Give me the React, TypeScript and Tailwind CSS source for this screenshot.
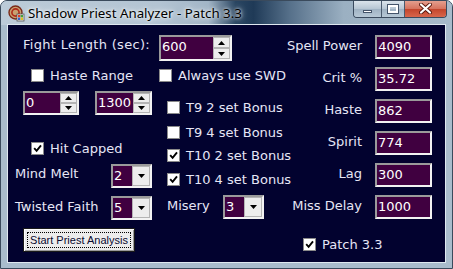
import React from "react";

const sunken =
  "border-2 border-t-[#9a9a9a] border-l-[#9a9a9a] border-r-[#f2f2f2] border-b-[#f2f2f2] bg-[#400040]";

function Up() {
  return (
    <svg width="7" height="4" viewBox="0 0 7 4">
      <polygon points="3.5,0 7,4 0,4" fill="#000" />
    </svg>
  );
}
function Down() {
  return (
    <svg width="7" height="4" viewBox="0 0 7 4">
      <polygon points="0,0 7,0 3.5,4" fill="#000" />
    </svg>
  );
}

function Check({ checked }: { checked?: boolean }) {
  return (
    <span className="w-[13px] h-[13px] bg-white border border-[#8a8a8a] flex items-center justify-center shrink-0">
      {checked && (
        <svg width="9" height="9" viewBox="0 0 9 9">
          <path d="M1.2 4.2 L3.6 6.8 L8 1.4" stroke="#000" strokeWidth="1.9" fill="none" />
        </svg>
      )}
    </span>
  );
}

function CheckRow({ label, checked, className }: { label: string; checked?: boolean; className?: string }) {
  return (
    <div className={"h-[13px] flex items-center gap-[6px] " + (className ?? "")}>
      <Check checked={checked} />
      <span className="leading-[16px] whitespace-nowrap">{label}</span>
    </div>
  );
}

function Spin({ value, className }: { value: string; className: string }) {
  return (
    <div className={"flex " + sunken + " " + className}>
      <span className="flex-1 pl-[1px] text-white leading-[20px]">{value}</span>
      <div className="w-[17px] flex flex-col">
        <div className="flex-1 bg-[#ededed] border border-[#b4b4b4] flex items-center justify-center">
          <Up />
        </div>
        <div className="flex-1 bg-[#ededed] border border-[#b4b4b4] flex items-center justify-center">
          <Down />
        </div>
      </div>
    </div>
  );
}

function Drop({ value }: { value: string }) {
  return (
    <div className={"flex w-[41px] h-[24px] shrink-0 " + sunken}>
      <span className="flex-1 pl-[1px] text-white leading-[20px]">{value}</span>
      <div className="w-[18px] bg-[#ededed] border border-[#b4b4b4] flex items-center justify-center">
        <Down />
      </div>
    </div>
  );
}

function Field({ label, value, first }: { label: string; value: string; first?: boolean }) {
  return (
    <div className={"h-[24px] flex items-center justify-end " + (first ? "mt-[10px]" : "mt-[8px]")}>
      <span className="leading-[16px] -mt-[2px] whitespace-nowrap">{label}</span>
      <div className={"w-[57px] h-[24px] ml-[13px] " + sunken}>
        <span className="block pl-[1px] text-white leading-[20px]">{value}</span>
      </div>
    </div>
  );
}

export default function App() {
  return (
    <div className="w-[453px] h-[269px] overflow-hidden bg-[#a9bccc] rounded-t-[7px] border border-[#3a4a5c] flex flex-col">
      {/* title bar */}
      <div className="h-[24px] shrink-0 flex items-start bg-[linear-gradient(90deg,#bccbd8_0%,#b3c4d3_35%,#a2b5c6_46%,#2a4662_52%,#1f3a57_56%,#56708a_64%,#9bb0c2_76%,#a8bbcb_100%)]">
        <svg width="17" height="17" viewBox="0 0 17 17" className="ml-[7px] mt-[4px] shrink-0">
          <circle cx="7.5" cy="7.5" r="6.5" fill="#c8a070" stroke="#7a2a18" strokeWidth="1.4" />
          <circle cx="7.5" cy="7.5" r="3.6" fill="none" stroke="#b02818" strokeWidth="1.6" />
          <rect x="9" y="9" width="7" height="7" fill="#e8e8e8" stroke="#555" strokeWidth="0.8" />
          <rect x="10" y="10" width="2.4" height="2.4" fill="#e04020" />
          <rect x="12.6" y="10" width="2.4" height="2.4" fill="#40a040" />
          <rect x="10" y="12.6" width="2.4" height="2.4" fill="#3060d0" />
          <rect x="12.6" y="12.6" width="2.4" height="2.4" fill="#e0c020" />
        </svg>
        <span className="ml-[3px] mt-[3px] text-[13.3px] leading-[18px] text-black [font-family:'Noto_Sans',sans-serif] [text-shadow:0_0_6px_#ffffff,0_0_3px_#ffffff] whitespace-nowrap">
          Shadow Priest Analyzer - Patch 3.3
        </span>
        <div className="ml-auto mr-[5px] -mt-[1px] flex h-[18px] border border-[#3a4a5e] border-t-0 rounded-b-[4px] overflow-hidden">
          <div className="w-[28px] flex items-center justify-center bg-[linear-gradient(180deg,#dfe7ee_0%,#b8c7d4_50%,#9eb1c2_51%,#b7c8d6_100%)] border-r border-[#4a5a6e]">
            <span className="w-[9px] h-[3px] bg-white border border-[#44546a] mt-[5px]" />
          </div>
          <div className="w-[23px] flex items-center justify-center bg-[linear-gradient(180deg,#dfe7ee_0%,#b8c7d4_50%,#9eb1c2_51%,#b7c8d6_100%)] border-r border-[#4a5a6e]">
            <span className="w-[10px] h-[8px] border-2 border-white outline outline-1 outline-[#44546a]" />
          </div>
          <div className="w-[41px] flex items-center justify-center bg-[linear-gradient(180deg,#e6a494_0%,#d77560_50%,#c2432a_51%,#d8664c_100%)]">
            <svg width="13" height="11" viewBox="0 0 13 11">
              <path d="M2 1.5 L11 9.5 M11 1.5 L2 9.5" stroke="#5a1a10" strokeWidth="4" strokeLinecap="round" />
              <path d="M2 1.5 L11 9.5 M11 1.5 L2 9.5" stroke="#ffffff" strokeWidth="2.2" strokeLinecap="round" />
            </svg>
          </div>
        </div>
      </div>

      {/* client area */}
      <div className="mx-[7px] h-[237px] shrink-0 bg-[#02022f] flex text-[13px] text-[#e6e6f6] [font-family:'DejaVu_Sans',sans-serif] outline outline-1 outline-[#dfe8f0]">
        {/* column A */}
        <div className="w-[151px] shrink-0 flex flex-col">
          <div className="h-[26px] mt-[10px] pl-[15px] pt-[2px] leading-[16px] tracking-[0.3px] whitespace-nowrap">Fight Length (sec):</div>
          <CheckRow label="Haste Range" className="mt-[8px] pl-[23px]" />
          <div className="h-[24px] mt-[9px] pl-[15px] flex gap-[16px]">
            <Spin value="0" className="w-[56px] h-[24px]" />
            <Spin value="1300" className="w-[57px] h-[24px]" />
          </div>
          <CheckRow label="Hit Capped" checked className="mt-[27px] pl-[23px]" />
          <div className="w-[144px] h-[24px] mt-[9px] pl-[7px] flex items-center">
            <span className="leading-[16px] -mt-[4px]">Mind Melt</span>
            <div className="ml-auto">
              <Drop value="2" />
            </div>
          </div>
          <div className="w-[144px] h-[24px] mt-[8px] pl-[7px] flex items-center">
            <span className="leading-[16px] -mt-[2px] whitespace-nowrap">Twisted Faith</span>
            <div className="ml-auto">
              <Drop value="5" />
            </div>
          </div>
          <div className="mt-[8px] ml-[15px] w-[112px] h-[24px] bg-[#ececec] border border-[#1a1a1a] shadow-[inset_1px_1px_0_#ffffff,inset_-1px_-1px_0_#9a9a9a] p-[3px]">
            <div className="h-full border border-dotted border-[#000] flex items-center justify-center text-[11px] text-[#0a0a30] [font-family:'Liberation_Sans',sans-serif] whitespace-nowrap">
              Start Priest Analysis
            </div>
          </div>
        </div>

        {/* column B */}
        <div className="w-[128px] shrink-0 flex flex-col">
          <Spin value="600" className="mt-[10px] w-[73px] h-[26px]" />
          <CheckRow label="Always use SWD" className="mt-[8px]" />
          <CheckRow label="T9 2 set Bonus" className="mt-[19px] pl-[8px]" />
          <CheckRow label="T9 4 set Bonus" className="mt-[12px] pl-[8px]" />
          <CheckRow label="T10 2 set Bonus" checked className="mt-[10px] pl-[8px]" />
          <CheckRow label="T10 4 set Bonus" checked className="mt-[11px] pl-[8px]" />
          <div className="h-[24px] mt-[9px] pl-[8px] flex items-center">
            <span className="leading-[16px] -mt-[2px] w-[56px]">Misery</span>
            <Drop value="3" />
          </div>
        </div>

        {/* column C */}
        <div className="w-[145px] shrink-0 flex flex-col">
          <Field label="Spell Power" value="4090" first />
          <Field label="Crit %" value="35.72" />
          <Field label="Haste" value="862" />
          <Field label="Spirit" value="774" />
          <Field label="Lag" value="300" />
          <Field label="Miss Delay" value="1000" />
          <CheckRow label="Patch 3.3" checked className="mt-[19px] ml-[16px]" />
        </div>
      </div>
    </div>
  );
}
